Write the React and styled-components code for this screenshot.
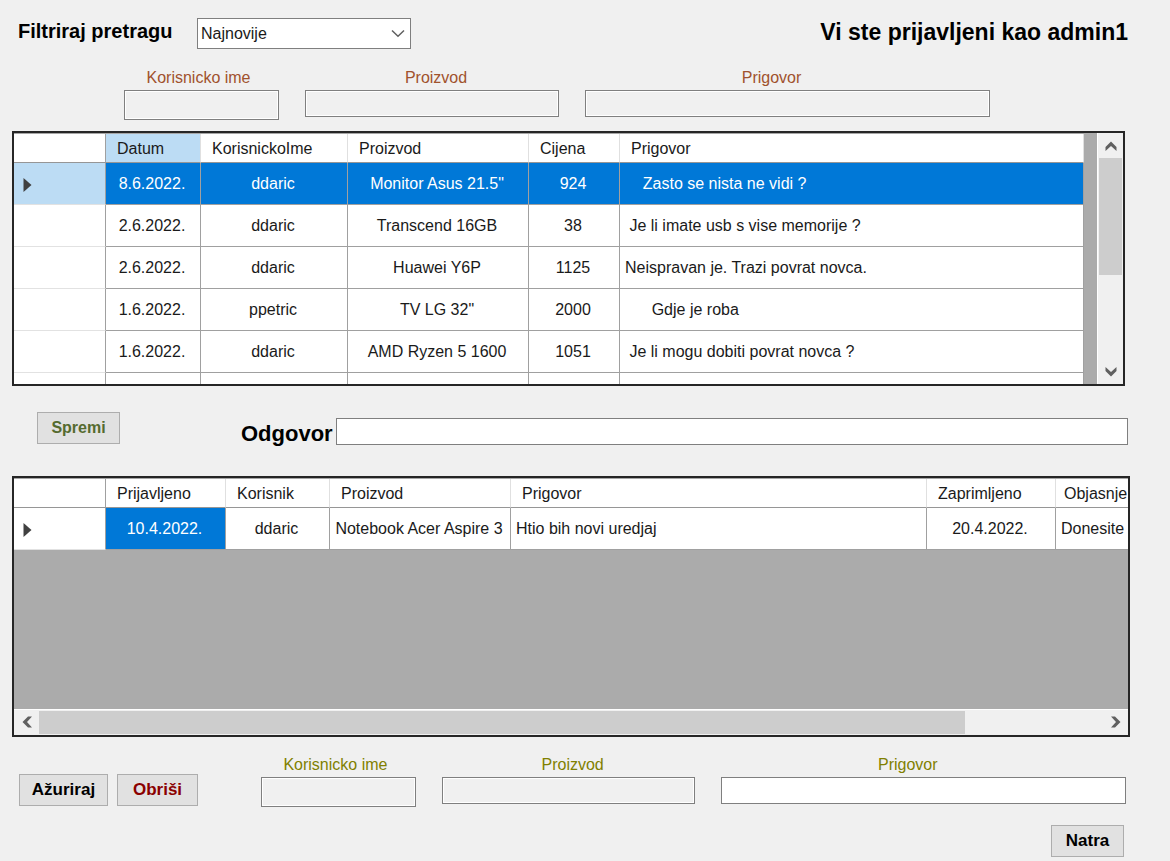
import React from "react";
import styled, { createGlobalStyle, css } from "styled-components";

const GlobalStyle = createGlobalStyle`
  *, *::before, *::after { box-sizing: border-box; }
  body {
    margin: 0;
    background: #f0f0f0;
    color: #1a1a1a;
    font-family: "Liberation Sans", Arial, sans-serif;
    font-size: 16px;
    line-height: 20px;
  }
  button, input, select { font: inherit; color: inherit; border-radius: 0; margin: 0; }
`;

const Form = styled.main`
  display: flex;
  flex-direction: column;
  padding: 18px 40px 5px 12px;
`;

const TopBar = styled.header`
  display: flex;
  align-items: flex-start;
  gap: 22px;
  padding: 0 2px 0 6px;
`;

const FilterLabel = styled.label`
  font-size: 20px;
  line-height: 26px;
  font-weight: bold;
  color: #000;
  width: 157px;
  white-space: nowrap;
`;

const SignedIn = styled.p`
  margin: 0 0 0 auto;
  font-size: 23px;
  line-height: 28px;
  font-weight: bold;
  color: #000;
`;

const SelectBox = styled.div`
  display: grid;
  width: 214px;
  align-items: center;
  > * { grid-area: 1 / 1; }
  svg { justify-self: end; margin-right: 6px; pointer-events: none; }
`;

const Select = styled.select`
  appearance: none;
  width: 100%;
  height: 31px;
  padding: 0 3px;
  border: 1px solid #7f7f7f;
  background: #fff;
`;

const Fields = styled.div`
  flex: 1;
  display: grid;
  grid-template-columns: 155fr 254fr 405fr;
  column-gap: 26px;
`;

const FilterFields = styled.section`
  display: flex;
  padding: 0 140px 0 112px;
  margin: 19px 0 11px;
`;

const Field = styled.div`
  display: flex;
  flex-direction: column;
  min-width: 0;
  gap: 2px;
  color: ${(p) => p.$color};
`;

const FieldLabel = styled.label`
  text-align: center;
  padding: ${(p) => p.$inset || "0 0 0 8px"};
  white-space: nowrap;
`;

const TextInput = styled.input`
  width: 100%;
  height: ${(p) => (p.$tall ? 30 : 27)}px;
  padding: 0 4px;
  border: 1px solid #7f7f7f;
  background: #fff;
  color: #1a1a1a;
  &:disabled {
    background: #f0f0f0;
    box-shadow: inset 0 0 0 1px #fff;
  }
`;

const GridFrame = styled.section`
  display: flex;
  flex-direction: ${(p) => (p.$horizontal ? "column" : "row")};
  height: ${(p) => (p.$horizontal ? 261 : 255)}px;
  margin-right: ${(p) => (p.$horizontal ? 0 : 5)}px;
  border: 2px solid #262626;
  background: #ababab;
  overflow: hidden;
`;

const GridView = styled.div`
  flex: 1;
  min-width: 0;
  min-height: 0;
  padding-right: ${(p) => (p.$gutter ? "13px" : "0")};
  overflow: hidden;
`;

const Table = styled.table`
  width: 100%;
  table-layout: fixed;
  border-collapse: separate;
  border-spacing: 0;
  background: #fff;
  border-top: 1px solid #a6a6a6;
`;

const HeadCell = styled.th`
  height: 29px;
  padding: 2px 0 0 ${(p) => (p.$tight ? 8 : 11)}px;
  font-weight: normal;
  text-align: left;
  white-space: nowrap;
  border-right: ${(p) => (p.$tight ? 0 : 1)}px solid #e0e0e0;
  border-bottom: 1px solid #969696;
  background: ${(p) => (p.$active ? "#bcdcf4" : "#fff")};
  &:first-child { border-right-color: #a0a0a0; }
`;

const RowHead = styled.th`
  height: 42px;
  padding: 2px 9px 0;
  border-right: 1px solid #a0a0a0;
  border-bottom: 1px solid #e2e2e2;
  background: ${(p) => (p.$active ? "#bcdcf4" : "#fff")};
  svg { display: block; }
`;

const Cell = styled.td`
  height: 42px;
  padding: ${(p) => (p.$start ? "0 0 0 5px" : "0 2px 0 0")};
  text-align: ${(p) => (p.$start ? "left" : "center")};
  white-space: pre;
  border-right: ${(p) => (p.$tight ? 0 : 1)}px solid #a0a0a0;
  border-bottom: 1px solid #a0a0a0;
  ${(p) =>
    p.$selected &&
    css`
      background: #0078d7;
      color: #fff;
    `}
`;

const ScrollBar = styled.div`
  display: flex;
  flex: none;
  flex-direction: ${(p) => (p.$horizontal ? "row" : "column")};
  ${(p) => (p.$horizontal ? "height: 26px" : "width: 26px")};
  background: #f0f0f0;
  border-${(p) => (p.$horizontal ? "top" : "left")}: 1px solid #fff;
`;

const ScrollButton = styled.button`
  display: grid;
  place-items: center;
  width: 25px;
  height: ${(p) => (p.$short ? 23 : 25)}px;
  padding: 0;
  border: 0;
  background: transparent;
`;

const Track = styled.div`
  flex: 1;
  display: flex;
  flex-direction: ${(p) => (p.$horizontal ? "row" : "column")};
  padding: ${(p) => (p.$horizontal ? "1px 0" : "0 1px")};
`;

const Thumb = styled.div`
  flex: 0 0 ${(p) => p.$size}%;
  background: #cdcdcd;
`;

const AnswerRow = styled.section`
  display: flex;
  align-items: flex-start;
  padding: 0 2px 0 25px;
  margin: 26px 0 31px;
`;

const AnswerField = styled.div`
  flex: 1;
  display: flex;
  align-items: flex-start;
  gap: 3px;
  margin: 6px 0 0 121px;
`;

const AnswerLabel = styled.label`
  font-size: 22px;
  line-height: 26px;
  padding-top: 3px;
  margin-bottom: -3px;
  font-weight: bold;
  color: #000;
`;

const Button = styled.button`
  width: ${(p) => p.$width}px;
  height: 32px;
  padding: 0;
  border: 1px solid #adadad;
  background: #e1e1e1;
  color: ${(p) => p.$color || "#000"};
  font-size: ${(p) => (p.$small ? 16 : 17)}px;
  font-weight: bold;
`;

const EditRow = styled.section`
  display: flex;
  align-items: flex-start;
  padding: 0 4px 0 7px;
  margin-top: 18px;
`;

const Actions = styled.div`
  display: flex;
  gap: 9px;
  margin: 19px 63px 0 0;
`;

const Footer = styled.footer`
  display: flex;
  justify-content: flex-end;
  padding-right: 6px;
  margin-top: 18px;
`;

const turns = { up: 0, right: 90, down: 180, left: 270 };

function Arrow({ to }) {
  return (
    <svg width="12" height="12" viewBox="0 0 12 12" aria-hidden="true">
      <path
        d="M6 1.5 11.5 7v4L6 6 .5 11V7Z"
        fill="#606060"
        transform={`rotate(${turns[to]} 6 6)`}
      />
    </svg>
  );
}

function RowMarker() {
  return (
    <svg width="9" height="14" viewBox="0 0 9 14" aria-hidden="true">
      <path d="M.5 0v14L8.5 7Z" fill="#404040" />
    </svg>
  );
}

function FieldSet({ prefix, color, editable }) {
  return (
    <Fields>
      <Field $color={color}>
        <FieldLabel $inset="0 6px 0 0" htmlFor={`${prefix}-user`}>Korisnicko ime</FieldLabel>
        <TextInput id={`${prefix}-user`} $tall disabled />
      </Field>
      <Field $color={color}>
        <FieldLabel htmlFor={`${prefix}-product`}>Proizvod</FieldLabel>
        <TextInput id={`${prefix}-product`} disabled />
      </Field>
      <Field $color={color}>
        <FieldLabel $inset="0 32px 0 0" htmlFor={`${prefix}-complaint`}>Prigovor</FieldLabel>
        <TextInput id={`${prefix}-complaint`} disabled={!editable} />
      </Field>
    </Fields>
  );
}

const complaints = [
  ["8.6.2022.", "ddaric", 'Monitor Asus 21.5"', "924", "    Zasto se nista ne vidi ?"],
  ["2.6.2022.", "ddaric", "Transcend 16GB", "38", " Je li imate usb s vise memorije ?"],
  ["2.6.2022.", "ddaric", "Huawei Y6P", "1125", "Neispravan je. Trazi povrat novca."],
  ["1.6.2022.", "ppetric", 'TV LG 32"', "2000", "      Gdje je roba"],
  ["1.6.2022.", "ddaric", "AMD Ryzen 5 1600", "1051", " Je li mogu dobiti povrat novca ?"],
  ["", "", "", "", ""],
];

const resolved = ["10.4.2022.", "ddaric", "Notebook Acer Aspire 3", "Htio bih novi uredjaj", "20.4.2022.", "Donesite"];

function Columns({ widths }) {
  return (
    <colgroup>
      {widths.map((width, i) => (
        <col key={i} width={width} />
      ))}
    </colgroup>
  );
}

export default function App() {
  return (
    <>
      <GlobalStyle />
      <Form>
        <TopBar>
          <FilterLabel htmlFor="sort">Filtriraj pretragu</FilterLabel>
          <SelectBox>
            <Select id="sort" defaultValue="Najnovije">
              <option>Najnovije</option>
            </Select>
            <svg width="14" height="9" viewBox="0 0 14 9" aria-hidden="true">
              <path d="m1 1.5 6 5.8 6-5.8" fill="none" stroke="#606060" strokeWidth="1.5" />
            </svg>
          </SelectBox>
          <SignedIn>Vi ste prijavljeni kao admin1</SignedIn>
        </TopBar>

        <FilterFields>
          <FieldSet prefix="filter" color="#a0522d" />
        </FilterFields>

        <GridFrame>
          <GridView $gutter>
            <Table>
              <Columns widths={[92, 95, 147, 181, 91, undefined]} />
              <thead>
                <tr>
                  <HeadCell />
                  <HeadCell $active>Datum</HeadCell>
                  <HeadCell>KorisnickoIme</HeadCell>
                  <HeadCell>Proizvod</HeadCell>
                  <HeadCell>Cijena</HeadCell>
                  <HeadCell>Prigovor</HeadCell>
                </tr>
              </thead>
              <tbody>
                {complaints.map((row, r) => (
                  <tr key={r}>
                    <RowHead $active={r === 0}>{r === 0 && <RowMarker />}</RowHead>
                    {row.map((text, c) => (
                      <Cell key={c} $selected={r === 0} $start={c === 4}>
                        {text}
                      </Cell>
                    ))}
                  </tr>
                ))}
              </tbody>
            </Table>
          </GridView>
          <ScrollBar>
            <ScrollButton aria-label="Gore"><Arrow to="up" /></ScrollButton>
            <Track><Thumb $size={58} /></Track>
            <ScrollButton aria-label="Dolje"><Arrow to="down" /></ScrollButton>
          </ScrollBar>
        </GridFrame>

        <AnswerRow>
          <Button $width={83} $small $color="#556b2f">Spremi</Button>
          <AnswerField>
            <AnswerLabel htmlFor="answer">Odgovor</AnswerLabel>
            <TextInput id="answer" />
          </AnswerField>
        </AnswerRow>

        <GridFrame $horizontal>
          <GridView>
            <Table>
              <Columns widths={[92, 120, 104, 181, undefined, 129, 72]} />
              <thead>
                <tr>
                  <HeadCell />
                  <HeadCell>Prijavljeno</HeadCell>
                  <HeadCell>Korisnik</HeadCell>
                  <HeadCell>Proizvod</HeadCell>
                  <HeadCell>Prigovor</HeadCell>
                  <HeadCell>Zaprimljeno</HeadCell>
                  <HeadCell $tight>Objasnje</HeadCell>
                </tr>
              </thead>
              <tbody>
                <tr>
                  <RowHead><RowMarker /></RowHead>
                  {resolved.map((text, c) => (
                    <Cell key={c} $selected={c === 0} $start={c === 3 || c === 5} $tight={c === 5}>
                      {text}
                    </Cell>
                  ))}
                </tr>
              </tbody>
            </Table>
          </GridView>
          <ScrollBar $horizontal>
            <ScrollButton $short aria-label="Lijevo"><Arrow to="left" /></ScrollButton>
            <Track $horizontal><Thumb $size={87} /></Track>
            <ScrollButton $short aria-label="Desno"><Arrow to="right" /></ScrollButton>
          </ScrollBar>
        </GridFrame>

        <EditRow>
          <Actions>
            <Button $width={89}>Ažuriraj</Button>
            <Button $width={81} $color="#8b0000">Obriši</Button>
          </Actions>
          <FieldSet prefix="edit" color="#808000" editable />
        </EditRow>

        <Footer>
          <Button $width={73}>Natra</Button>
        </Footer>
      </Form>
    </>
  );
}
